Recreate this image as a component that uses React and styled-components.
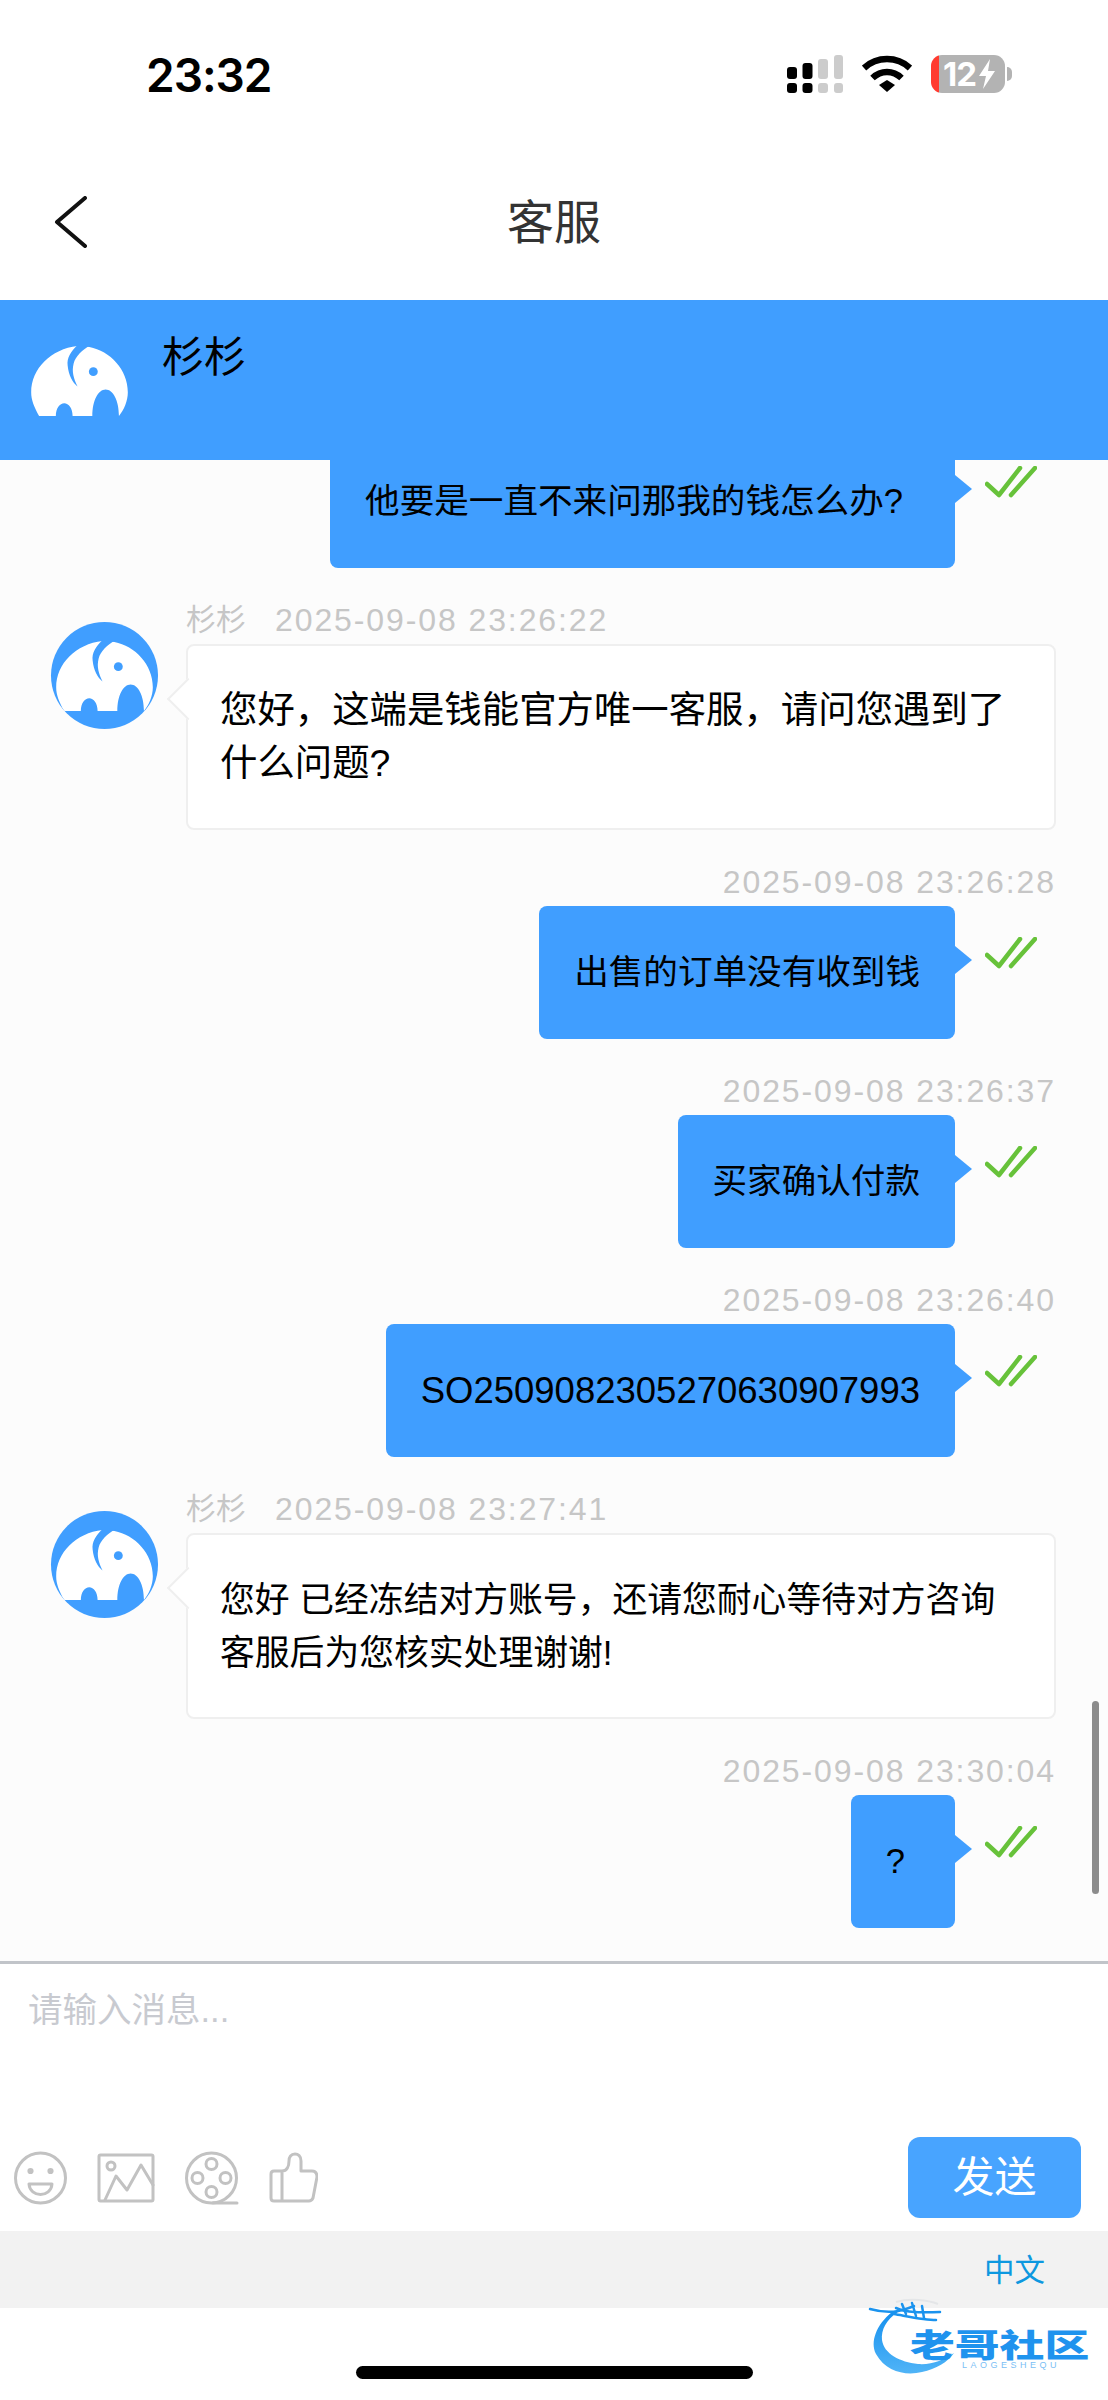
import React from "react";
import styled, { createGlobalStyle } from "styled-components";

const CJK = `"Liberation Sans", "Noto Sans CJK SC", sans-serif`;
const BLUE = "#409eff";

const Global = createGlobalStyle`
  html, body { margin: 0; padding: 0; background: #fff; }
  * { box-sizing: border-box; }
  body { font-family: ${CJK}; }
`;

const Page = styled.div`
  position: relative;
  width: 1108px;
  height: 2400px;
  display: flex;
  flex-direction: column;
  overflow: hidden;
  background: #fff;
  color: #000;
`;

/* status bar */
const StatusBar = styled.div`
  height: 115px;
  flex: none;
  display: flex;
  align-items: flex-start;
  justify-content: space-between;
  padding: 55px 97px 0 146px;
`;
const Clock = styled.div`
  font-family: "Inter", "Liberation Sans", sans-serif;
  font-weight: 600;
  font-size: 46px;
  line-height: 40px;
  letter-spacing: -1px;
`;
const StatusIcons = styled.div`
  display: flex;
  align-items: flex-start;
  margin-right: 6px;
`;
const Signal = styled.svg`
  width: 56px;
  height: 38px;
  margin-right: 19px;
`;
const Wifi = styled.svg`
  width: 50px;
  height: 37px;
  margin-right: 19px;
`;
const Battery = styled.div`
  position: relative;
  width: 74px;
  height: 38px;
  border-radius: 11px;
  background: linear-gradient(90deg, #ff3b30 8px, #b3b3b3 8px);
  color: #fff;
  font-family: "Inter", "Liberation Sans", sans-serif;
  font-weight: 700;
  font-size: 33px;
  line-height: 38px;
  padding-left: 12px;
  letter-spacing: -1px;
  display: flex;
  align-items: center;
  &::after {
    content: "";
    position: absolute;
    right: -7px;
    top: 12px;
    width: 5px;
    height: 14px;
    border-radius: 0 5px 5px 0;
    background: #b3b3b3;
  }
`;
const Bolt = styled.svg`
  width: 18px;
  height: 30px;
  margin-left: 2px;
`;

/* nav bar */
const NavBar = styled.div`
  position: relative;
  height: 185px;
  flex: none;
  display: flex;
  align-items: center;
  justify-content: center;
  padding-top: 30px;
  background: #fff;
`;
const BackIcon = styled.svg`
  position: absolute;
  left: 54px;
  top: 81px;
  width: 34px;
  height: 52px;
`;
const Title = styled.div`
  font-size: 47px;
  line-height: 54px;
  color: #333;
`;

/* blue peer header */
const PeerBar = styled.div`
  position: relative;
  z-index: 2;
  height: 160px;
  flex: none;
  display: flex;
  align-items: flex-start;
  padding: 36px 0 0 30px;
  background: ${BLUE};
`;
const PeerName = styled.div`
  margin-left: 32px;
  margin-top: -8px;
  font-size: 42px;
  line-height: 60px;
  color: #000;
`;
const ElephantSvg = styled.svg`
  flex: none;
  width: 100px;
  height: 72px;
  margin-top: 9px;
  display: block;
`;
const AvatarCircle = styled.div`
  flex: none;
  width: 107px;
  height: 107px;
  margin-top: 20px;
  border-radius: 50%;
  background: ${BLUE};
  overflow: hidden;
  display: flex;
  align-items: center;
  justify-content: center;
  svg { margin-top: 0; }
`;

/* chat */
const Chat = styled.div`
  position: relative;
  height: 1504px;
  flex: none;
  overflow: hidden;
  background: #fcfcfc;
  padding: 0 52px 0 51px;
  border-bottom: 3px solid #c1c4c9;
`;
const MessageList = styled.div`
  display: flex;
  flex-direction: column;
  gap: 34px;
  margin-top: -25px;
`;
const Group = styled.div`
  display: flex;
  gap: 28px;
`;
const GroupBody = styled.div`
  flex: 1;
  min-width: 0;
  display: flex;
  flex-direction: column;
`;
const Meta = styled.div`
  height: 36px;
  margin-bottom: 6px;
  display: flex;
  align-items: center;
  justify-content: ${(p) => (p.$mine ? "flex-end" : "flex-start")};
  gap: 29px;
  line-height: 36px;
  color: #c6c6c6;
  white-space: nowrap;
`;
const MetaName = styled.span`
  font-size: 30px;
`;
const MetaTime = styled.span`
  font-size: 32px;
  letter-spacing: 1.9px;
`;
const MineRow = styled.div`
  display: flex;
  justify-content: flex-end;
  align-items: flex-start;
`;
const MineBubble = styled.div`
  position: relative;
  padding: 40px ${(p) => p.$right || 35}px 40px 35px;
  background: ${BLUE};
  border-radius: 8px;
  font-size: ${(p) => p.$size || 34.6}px;
  line-height: 53px;
  color: #000;
  white-space: nowrap;
  &::after {
    content: "";
    position: absolute;
    right: -17px;
    top: 40px;
    border-left: 17px solid ${BLUE};
    border-top: 14px solid transparent;
    border-bottom: 14px solid transparent;
  }
`;
const Check = styled.svg`
  flex: none;
  width: 52px;
  height: 32px;
  margin: 31px 19px 0 30px;
`;
const TheirBubble = styled.div`
  position: relative;
  padding: 38px 32px;
  background: #fff;
  border: 2px solid #efefef;
  border-radius: 8px;
  font-size: ${(p) => p.$size}px;
  line-height: 53px;
  color: #000;
  &::before {
    content: "";
    position: absolute;
    left: -15px;
    top: 38px;
    width: 28px;
    height: 28px;
    background: #fff;
    border-left: 2px solid #efefef;
    border-bottom: 2px solid #efefef;
    transform: rotate(45deg);
  }
`;
const Scroll = styled.div`
  position: absolute;
  right: 9px;
  top: 1241px;
  width: 7px;
  height: 193px;
  border-radius: 4px;
  background: #8c8c8c;
`;

/* composer */
const Composer = styled.div`
  height: 267px;
  flex: none;
  display: flex;
  flex-direction: column;
  justify-content: space-between;
  padding: 20px 27px 13px 14px;
  background: #fff;
`;
const Placeholder = styled.div`
  padding-left: 14px;
  font-size: 34.5px;
  line-height: 53px;
  color: #c8cad0;
`;
const Toolbar = styled.div`
  display: flex;
  align-items: center;
  justify-content: space-between;
`;
const Tools = styled.div`
  display: flex;
  align-items: center;
  gap: 30px;
`;
const ToolIcon = styled.svg`
  display: block;
  width: ${(p) => p.$w}px;
  height: 54px;
  fill: none;
  stroke: #c2c2c2;
  stroke-width: 3;
  stroke-linecap: round;
  stroke-linejoin: round;
`;
const SendButton = styled.button`
  width: 173px;
  height: 81px;
  border: 0;
  border-radius: 12px;
  background: #48a4ff;
  color: #fff;
  font-family: ${CJK};
  font-size: 42px;
  line-height: 81px;
  padding: 0;
`;

/* language bar */
const LangBar = styled.div`
  height: 77px;
  flex: none;
  display: flex;
  align-items: center;
  justify-content: flex-end;
  padding: 0 63px 0 0;
  background: #f2f2f2;
`;
const Lang = styled.div`
  font-size: 30.5px;
  line-height: 40px;
  color: #0d98e0;
`;

/* bottom */
const HomeArea = styled.div`
  flex: 1;
  display: flex;
  justify-content: center;
  padding-top: 58px;
`;
const HomeBar = styled.div`
  width: 397px;
  height: 13px;
  border-radius: 7px;
  background: #000;
`;

/* watermark, lying over the page corner */
const Watermark = styled.div`
  position: absolute;
  left: 840px;
  top: 2270px;
  width: 268px;
  height: 130px;
`;
const WatermarkArt = styled.svg`
  position: absolute;
  inset: 0;
  width: 268px;
  height: 130px;
`;
const WatermarkName = styled.div`
  position: absolute;
  left: 70px;
  top: 57px;
  width: 128px;
  font-family: "Noto Sans CJK SC", sans-serif;
  font-weight: 900;
  font-size: 32px;
  line-height: 32px;
  white-space: nowrap;
  color: #1f93ee;
  transform: scaleX(1.4);
  transform-origin: left center;
`;
const WatermarkLatin = styled.div`
  position: absolute;
  left: 122px;
  top: 90px;
  font-size: 9px;
  line-height: 10px;
  letter-spacing: 3.5px;
  white-space: nowrap;
  color: #7cbff5;
`;

const Elephant = () => (
  <ElephantSvg viewBox="0 -1 99 73">
    <path
      fill="#fff"
      d="M8 71C3 62 0 55 0 47C0 23 20 3 47 0L59 1C80 5 98 24 98 47C98 56 94 65 89 71C89 55 83 44 75.5 44C68 44 62 55 62 71L42 71C42 63 38 58 33.5 58C29 58 25 63 25 71Z"
    />
    <path fill={BLUE} d="M47 -1C40 6 36 12 37 20C38 30 42 37 47 41C43 33 41 26 43 18C45 10 52 4 60 -1Z" />
    <circle fill={BLUE} cx="63" cy="26" r="4.5" />
  </ElephantSvg>
);

const DoubleCheck = () => (
  <Check viewBox="0 0 52 32">
    <g fill="none" stroke="#67c23a" strokeWidth="4.5" strokeLinecap="round" strokeLinejoin="round">
      <path d="M2 18L14 29L35 2" />
      <path d="M26 29L50 2" />
    </g>
  </Check>
);

const Mine = ({ time, size, right, children }) => (
  <GroupBody>
    <Meta $mine>
      <MetaTime>{time}</MetaTime>
    </Meta>
    <MineRow>
      <MineBubble $size={size} $right={right}>{children}</MineBubble>
      <DoubleCheck />
    </MineRow>
  </GroupBody>
);

const Theirs = ({ time, size, children }) => (
  <Group>
    <AvatarCircle>
      <Elephant />
    </AvatarCircle>
    <GroupBody>
      <Meta>
        <MetaName>杉杉</MetaName>
        <MetaTime>{time}</MetaTime>
      </Meta>
      <TheirBubble $size={size}>{children}</TheirBubble>
    </GroupBody>
  </Group>
);

export default function App() {
  return (
    <Page>
      <Global />
      <StatusBar>
        <Clock>23:32</Clock>
        <StatusIcons>
          <Signal viewBox="0 0 56 38">
            <g fill="#000">
              <rect x="0" y="12" width="10" height="12" rx="3" />
              <rect x="15.5" y="8" width="10" height="16" rx="3" />
              <rect x="0" y="28" width="10" height="10" rx="3" />
              <rect x="15.5" y="28" width="10" height="10" rx="3" />
            </g>
            <g fill="#cccccc">
              <rect x="31" y="4" width="10" height="20" rx="3" />
              <rect x="47" y="0" width="9" height="24" rx="3" />
              <rect x="31" y="28" width="10" height="10" rx="3" />
              <rect x="47" y="28" width="9" height="10" rx="3" />
            </g>
          </Signal>
          <Wifi viewBox="0 0 50 37">
            <g fill="none" stroke="#000" strokeWidth="6.5" strokeLinejoin="round">
              <path d="M2 13C15 1 35 1 48 13" />
              <path d="M10.5 23C19 15 31 15 39.5 23" />
            </g>
            <path fill="#000" d="M17 30L25 25L33 30L25 37Z" />
          </Wifi>
          <Battery>
            12
            <Bolt viewBox="0 0 18 30">
              <path fill="#fff" d="M12 0L1 17H8L5 30L17 12H10Z" />
            </Bolt>
          </Battery>
        </StatusIcons>
      </StatusBar>

      <NavBar>
        <BackIcon viewBox="0 0 34 52">
          <path d="M31 2L3 26L31 50" fill="none" stroke="#111" strokeWidth="4" strokeLinecap="round" strokeLinejoin="round" />
        </BackIcon>
        <Title>客服</Title>
      </NavBar>

      <PeerBar>
        <Elephant />
        <PeerName>杉杉</PeerName>
      </PeerBar>

      <Chat>
        <MessageList>
          <MineRow>
            <MineBubble $right={52}>他要是一直不来问那我的钱怎么办?</MineBubble>
            <DoubleCheck />
          </MineRow>
          <Theirs time="2025-09-08 23:26:22" size={37.4}>
            {"您好\uFF0C这端是钱能官方唯一客服\uFF0C请问您遇到了什么问题?"}
          </Theirs>
          <Mine time="2025-09-08 23:26:28">出售的订单没有收到钱</Mine>
          <Mine time="2025-09-08 23:26:37">买家确认付款</Mine>
          <Mine time="2025-09-08 23:26:40" size={36.5}>SO2509082305270630907993</Mine>
          <Theirs time="2025-09-08 23:27:41" size={34.8}>
            {"您好 已经冻结对方账号\uFF0C还请您耐心等待对方咨询客服后为您核实处理谢谢!"}
          </Theirs>
          <Mine time="2025-09-08 23:30:04" right={50}>?</Mine>
        </MessageList>
        <Scroll />
      </Chat>

      <Composer>
        <Placeholder>请输入消息...</Placeholder>
        <Toolbar>
          <Tools>
            <ToolIcon $w={53} viewBox="0 0 53 54">
              <circle cx="26.5" cy="27" r="25" />
              <circle cx="16.5" cy="20" r="1.6" fill="#c2c2c2" />
              <circle cx="36.5" cy="20" r="1.6" fill="#c2c2c2" />
              <path d="M15 33H38C37 47 16 47 15 33Z" />
            </ToolIcon>
            <ToolIcon $w={58} viewBox="0 0 58 54">
              <rect x="2" y="4" width="54" height="46" rx="1.5" />
              <circle cx="14" cy="15" r="4" />
              <path d="M8 49L19 25L30 39L44 14L56 34" />
            </ToolIcon>
            <ToolIcon $w={54} viewBox="0 0 54 54">
              <circle cx="26.5" cy="27" r="25" />
              <circle cx="26.5" cy="13" r="5.5" />
              <circle cx="26.5" cy="41" r="5.5" />
              <circle cx="12.5" cy="27" r="5.5" />
              <circle cx="40.5" cy="27" r="5.5" />
              <path d="M28 52H52" />
            </ToolIcon>
            <ToolIcon $w={49} viewBox="0 0 49 54">
              <path d="M13 20H5C3 20 2 21 2 23V47C2 49 3 50 5 50H40C42 50 43 49 44 47L48 26C48 22 46 20 43 20H32V10C32 5 29 3 26 3C22 3 20 6 20 10C20 15 18 20 13 20ZM13 20V50" />
            </ToolIcon>
          </Tools>
          <SendButton>发送</SendButton>
        </Toolbar>
      </Composer>

      <LangBar>
        <Lang>中文</Lang>
      </LangBar>

      <HomeArea>
        <HomeBar />
      </HomeArea>

      <Watermark>
        <WatermarkArt viewBox="0 0 268 130">
          <defs>
            <linearGradient id="ring" x1="0" y1="0" x2="0" y2="1">
              <stop offset="0" stopColor="#1690ee" />
              <stop offset="1" stopColor="#50b4f7" />
            </linearGradient>
          </defs>
          <path fill="url(#ring)" d="M52 42C36 55 30 72 36 84C46 102 66 106 82 102C96 99 108 92 114 83C104 90 92 95 78 94C60 92 44 84 42 70C41 60 46 50 58 42Z" />
          <g fill="none" stroke="#1a93ee" strokeWidth="2.5" strokeLinecap="round">
            <path d="M30 39C48 44 60 42 74 36" />
            <path d="M54 44C66 46 84 50 96 50" />
            <path d="M56 38C70 44 88 42 100 42" />
            <path d="M62 34L66 44M72 33L76 46M82 36L84 48" />
          </g>
          <path fill="none" stroke="#e4e6e8" strokeWidth="2" d="M56 32C70 28 88 30 98 34" />
        </WatermarkArt>
        <WatermarkName>老哥社区</WatermarkName>
        <WatermarkLatin>LAOGESHEQU</WatermarkLatin>
      </Watermark>
    </Page>
  );
}
